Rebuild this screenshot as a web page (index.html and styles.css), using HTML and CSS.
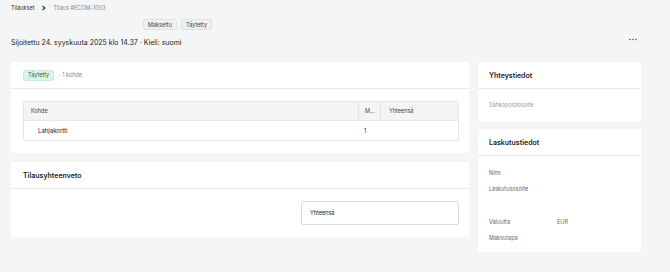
FILE: index.html
```html
<!DOCTYPE html>
<html lang="fi">
<head>
<meta charset="utf-8">
<link rel="stylesheet" href="styles.css">
</head>
<body>
<div class="page">
  <nav class="crumbs">
    <span class="crumb">Tilaukset</span>
    <svg class="chev" width="6" height="6" viewBox="0 0 6 6"><path d="M1.5 1 L4 3 L1.5 5" fill="none" stroke="#333" stroke-width="1.1"/></svg>
    <span class="crumb muted">Tilaus #ECOM-1003</span>
  </nav>
  <div class="title-row">
    <span class="tag">Maksettu</span>
    <span class="tag">Täytetty</span>
  </div>
  <div class="meta-row">
    <div class="meta">Sijoitettu 24. syyskuuta 2025 klo 14.37 · Kieli: suomi</div>
    <svg class="more" width="8" height="3" viewBox="0 0 8 3"><circle cx="1" cy="1.5" r="0.75" fill="#444"/><circle cx="4" cy="1.5" r="0.75" fill="#444"/><circle cx="7" cy="1.5" r="0.75" fill="#444"/></svg>
  </div>
  <div class="layout">
    <div class="main">
      <section class="card">
        <div class="card-head">
          <span class="tag green">Täytetty</span>
          <span class="count">· 1 kohde</span>
        </div>
        <div class="card-body">
          <div class="table">
            <div class="row head">
              <div class="c1">Kohde</div>
              <div class="c2">M...</div>
              <div class="c3">Yhteensä</div>
            </div>
            <div class="row">
              <div class="c1 item">Lahjakortti</div>
              <div class="c2">1</div>
              <div class="c3"></div>
            </div>
          </div>
        </div>
      </section>
      <section class="card">
        <div class="card-head"><h2>Tilausyhteenveto</h2></div>
        <div class="card-body summary">
          <div class="total">Yhteensä</div>
        </div>
      </section>
    </div>
    <aside class="side">
      <section class="card">
        <div class="card-head side-head"><h2>Yhteystiedot</h2></div>
        <div class="card-body side-body first">
          <div class="field faint">Sähköpostiosoite</div>
        </div>
      </section>
      <section class="card">
        <div class="card-head side-head"><h2>Laskutustiedot</h2></div>
        <div class="card-body side-body">
          <div class="field">Nimi</div>
          <div class="field">Laskutusosoite</div>
          <div class="field pair gap-top"><span class="k">Valuutta</span><span>EUR</span></div>
          <div class="field">Maksutapa</div>
        </div>
      </section>
    </aside>
  </div>
</div>
</body>
</html>
```
FILE: styles.css
```css
* { box-sizing: border-box; }
html, body { margin: 0; }
body {
  background: #f4f5f5;
  font-family: Inter, "Noto Sans", sans-serif;
  color: #222;
  width: 670px;
  height: 272px;
  overflow: hidden;
}
.page { padding: 3px 29px 0 11px; }
.crumbs { display: flex; align-items: center; gap: 4px; height: 10px; font-size: 5.5px; color: #333; }
.chev { margin: 0 2px 0 3px; }
.muted { color: #888; }
.title-row { display: flex; gap: 4px; margin: 6px 0 0 132px; height: 11px; }
.tag {
  display: inline-flex; align-items: center;
  height: 11px; padding: 0 4px;
  font-size: 5.5px; color: #444;
  background: #f0f0f0; border: 1px solid #e2e2e2; border-radius: 2px;
}
.tag.green { background: #dcf3e5; border-color: #cdebd8; color: #1f6b3f; }
.meta-row { display: flex; justify-content: space-between; align-items: center; margin-top: 5px; height: 14px; }
.meta { font-size: 7px; color: #222; }
.more { margin: -6px 4px 0 0; }
.layout { display: grid; grid-template-columns: 458px 163px; gap: 9px; margin-top: 13px; }
.main, .side { display: flex; flex-direction: column; gap: 9px; }
.side { gap: 7px; }
.card { background: #fff; border-radius: 2px; }
.card-head { display: flex; align-items: center; gap: 5px; height: 27px; padding: 0 12px; border-bottom: 1px solid #ececec; }
.card-head h2 { margin: 0; font-size: 7px; font-weight: 600; color: #222; }
.count { font-size: 5.5px; color: #888; }
.card-body { padding: 12px 10px 12px 12px; }
.table { border: 1px solid #e6e6e6; border-radius: 2px; font-size: 5.5px; }
.row { display: grid; grid-template-columns: 334px 22px 1fr; height: 19px; align-items: center; }
.row.head { background: #f4f4f5; color: #444; border-bottom: 1px solid #eaeaea; }
.row > div { height: 100%; display: flex; align-items: center; }
.row .c1 { padding-left: 7px; }
.row .c2 { padding-left: 6px; }
.row .c3 { padding-left: 8px; }
.row.head .c2, .row.head .c3 { border-left: 1px solid #e4e4e4; }
.row .item { padding-left: 14px; font-size: 6px; color: #222; }
.summary { display: flex; justify-content: flex-end; padding: 12px 10px 12px 12px; }
.total {
  width: 158px; height: 24px; display: flex; align-items: center; padding-left: 8px;
  border: 1px solid #dcdcdc; border-radius: 2px; font-size: 5.5px; color: #222;
}
.side-head { padding: 0 11px; }
.side-body { padding: 9px 11px 6px; }
.side-body.first { padding: 8px 11px 9px; }
.field { font-size: 5.5px; color: #666; height: 16px; display: flex; align-items: center; }
.field.faint { color: #999; }
.pair .k { width: 68px; }
.gap-top { margin-top: 17px; }
```
